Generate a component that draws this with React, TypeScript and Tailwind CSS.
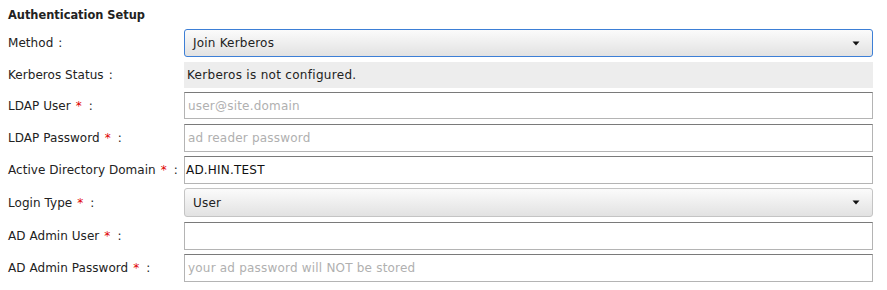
import type { ReactNode } from "react";

const font = { fontFamily: '"DejaVu Sans", Verdana, sans-serif' };

function Label({ children, required }: { children: ReactNode; required?: boolean }) {
  return (
    <div className="w-[184px] shrink-0 whitespace-nowrap pl-2 text-[12px] tracking-[0.05px] text-[#222]">
      {children}
      {required ? <span className="ml-[5px] text-[#e00000]">*</span> : null}
      <span className={required ? "ml-[7px]" : "ml-[5px]"}>:</span>
    </div>
  );
}

function SelectBox({ value, focused }: { value: string; focused?: boolean }) {
  return (
    <div
      className={`flex h-full w-[689px] items-center justify-between rounded-[3px] border bg-gradient-to-b from-[#fbfbfb] to-[#e2e2e2] pl-[8px] pr-[12px] text-[12px] tracking-[0.2px] text-[#222] ${
        focused ? "border-[#3d7fd6]" : "border-[#c4c4c4]"
      }`}
    >
      <span>{value}</span>
      <svg width="8" height="5" viewBox="0 0 8 5">
        <path d="M0.5 0.5 H7.5 L4 4.5 Z" fill="#111" />
      </svg>
    </div>
  );
}

function TextBox({ value, placeholder }: { value?: string; placeholder?: string }) {
  return (
    <div className="flex h-full w-[689px] items-center border border-[#b4b4b4] border-t-[#7a7a7a] bg-white pl-[1px] text-[12px] tracking-[0.2px]">
      {value ? (
        <span className="text-[#111]">{value}</span>
      ) : (
        <span className="pl-[2px] text-[#b0b0b0]">{placeholder}</span>
      )}
    </div>
  );
}

function Row({ h, mt, children }: { h: string; mt: string; children: ReactNode }) {
  return <div className={`flex items-center ${h} ${mt}`}>{children}</div>;
}

export default function App() {
  return (
    <div className="h-[290px] w-[887px] bg-white" style={font}>
      <div className="pl-2 pt-[7px] text-[11.4px] leading-[16px] font-bold text-[#222]">
        Authentication Setup
      </div>

      <Row h="h-[28px]" mt="mt-[6px]">
        <Label>Method</Label>
        <SelectBox value="Join Kerberos" focused />
      </Row>

      <Row h="h-[26px]" mt="mt-[5px]">
        <Label>Kerberos Status</Label>
        <div className="flex h-full w-[689px] items-center bg-[#ededed] pl-[3px] text-[12px] tracking-[0.3px] text-[#222]">
          Kerberos is not configured.
        </div>
      </Row>

      <Row h="h-[27px]" mt="mt-[4px]">
        <Label required>LDAP User</Label>
        <TextBox placeholder="user@site.domain" />
      </Row>

      <Row h="h-[28px]" mt="mt-[5px]">
        <Label required>LDAP Password</Label>
        <TextBox placeholder="ad reader password" />
      </Row>

      <Row h="h-[28px]" mt="mt-[4px]">
        <Label required>Active Directory Domain</Label>
        <TextBox value="AD.HIN.TEST" />
      </Row>

      <Row h="h-[29px]" mt="mt-[4px]">
        <Label required>Login Type</Label>
        <SelectBox value="User" />
      </Row>

      <Row h="h-[28px]" mt="mt-[5px]">
        <Label required>AD Admin User</Label>
        <TextBox />
      </Row>

      <Row h="h-[28px]" mt="mt-[4px]">
        <Label required>AD Admin Password</Label>
        <TextBox placeholder="your ad password will NOT be stored" />
      </Row>
    </div>
  );
}
